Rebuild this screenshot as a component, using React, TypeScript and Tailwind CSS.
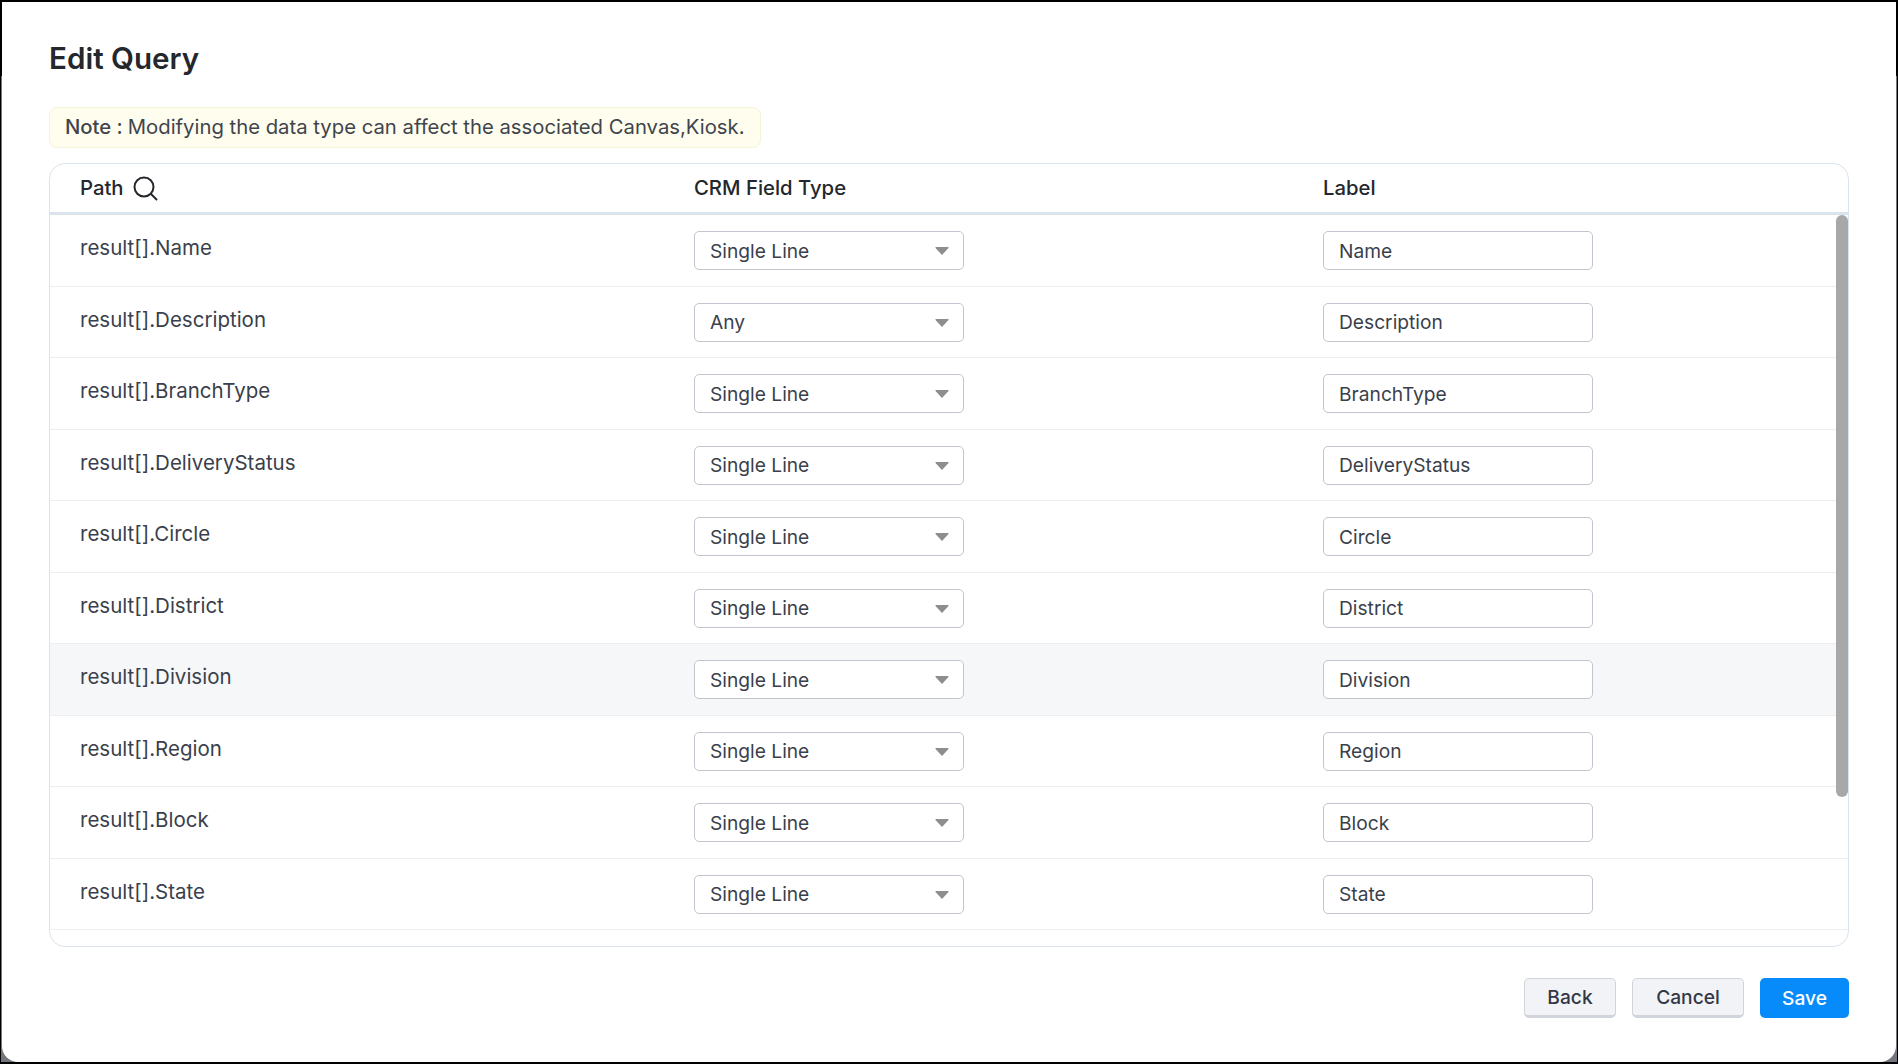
const rows = [
  ["Name", "Single Line"],
  ["Description", "Any"],
  ["BranchType", "Single Line"],
  ["DeliveryStatus", "Single Line"],
  ["Circle", "Single Line"],
  ["District", "Single Line"],
  ["Division", "Single Line"],
  ["Region", "Single Line"],
  ["Block", "Single Line"],
  ["State", "Single Line"],
];

export default function App() {
  return (
    <div className="relative h-[1064px] w-[1898px] overflow-hidden bg-black p-[2px] font-['Inter',sans-serif]">
      <div className="absolute bottom-[2px] left-[1px] top-[76px] w-[1px] bg-[#74767d]" />
      <div className="absolute bottom-[2px] right-[1px] top-[76px] w-[1px] bg-[#74767d]" />
      <div className="h-[1060px] w-[1894px] bg-[#74767d]">
        <div className="flex h-full w-full flex-col rounded-b-[16px] bg-white pl-[47px] pr-[47px]">
          <h1 className="mt-[38px] h-[36px] text-[29.6px] font-semibold leading-[36px] text-[#24272c]">Edit Query</h1>
          <div className="mt-[31px] flex h-[41px] w-[712px] items-center rounded-[8px] border border-[#f5f3d8] bg-[#fffeee] pb-[1px] pl-[15px] text-[20.3px] text-[#40444d]">
            <span className="font-medium">Note :</span>
            <span className="ml-[5px]">Modifying the data type can affect the associated Canvas,Kiosk.</span>
          </div>
          <div className="relative mt-[15px] h-[784px] w-[1800px] overflow-hidden rounded-[16px] border border-[#dbe4ec]">
            <div className="flex h-[51px] items-center border-b-[3px] border-[#dbe4ec] text-[20.3px] font-medium text-[#24272c]">
              <div className="flex w-[644px] items-center pl-[30px]">
                <span>Path</span>
                <svg className="ml-[9px]" width="25" height="25" viewBox="0 0 25 25" fill="none" stroke="#24272c" strokeWidth="2" strokeLinecap="round">
                  <circle cx="11" cy="11" r="9.5" />
                  <path d="M18 18l5.5 5.5" />
                </svg>
              </div>
              <div className="w-[629px]">CRM Field Type</div>
              <div>Label</div>
            </div>
            {rows.map(([name, type], i) => (
              <div key={name} className={`flex h-[71.5px] border-b border-[#eceef2] text-[#3a3f4b] ${i === 6 ? "bg-[#f6f7f9]" : "bg-white"}`}>
                <div className="w-[644px] pl-[30px] pt-[18px] text-[20.5px] leading-[30px]">result[].{name}</div>
                <div className="w-[629px] pt-[16px] text-[19.2px]">
                  <div className="flex h-[39px] w-[270px] items-center justify-between rounded-[5px] border border-[#c2c5cd] bg-white pl-[15px] pr-[14px] pt-[1px]">
                    <span>{type}</span>
                    <svg width="14" height="8" viewBox="0 0 14 8"><path d="M1 0h12q1 0 .5 1L7.5 7.6q-.5.6-1 0L.5 1Q0 0 1 0z" fill="#8e8e8e" /></svg>
                  </div>
                </div>
                <div className="pt-[16px] text-[19.2px]">
                  <div className="flex h-[39px] w-[270px] items-center rounded-[5px] border border-[#c2c5cd] bg-white pl-[15px] pt-[1px]">{name}</div>
                </div>
              </div>
            ))}
            <div className="absolute right-0 top-[51px] h-[582px] w-[12px] rounded-[6px] bg-[#a8a8a8]" />
          </div>
          <div className="mt-[31px] flex justify-end text-[19.2px] font-medium">
            <button className="h-[40px] w-[92px] rounded-[5px] border border-[#d0d4db] border-b-[3px] bg-[#f1f3f7] pt-[1px] text-[#333846]">Back</button>
            <button className="ml-[16px] h-[40px] w-[112px] rounded-[5px] border border-[#d0d4db] border-b-[3px] bg-[#f1f3f7] pt-[1px] text-[#333846]">Cancel</button>
            <button className="ml-[16px] h-[40px] w-[89px] rounded-[5px] bg-[#078bfa] text-white">Save</button>
          </div>
        </div>
      </div>
    </div>
  );
}
